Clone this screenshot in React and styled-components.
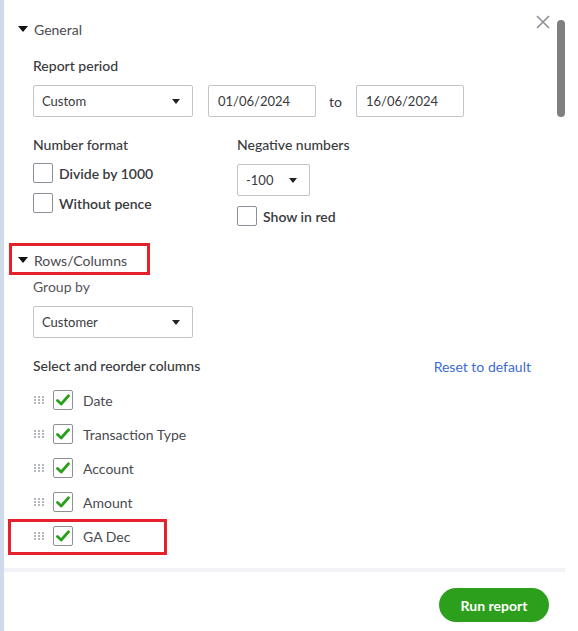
import React from "react";
import styled, { createGlobalStyle } from "styled-components";

const Global = createGlobalStyle`
  html, body { margin: 0; padding: 0; background: #fff; }
  body { font-family: Lato, "Open Sans", Arial, sans-serif; color: #393a3d; }
  *, *::before, *::after { box-sizing: border-box; }
`;

const Shell = styled.div`
  width: 578px;
  height: 631px;
  display: flex;
  background: #fff;
  overflow: hidden;
`;

const Strip = styled.div`
  width: 4px;
  flex: none;
  background: #cfdaeb;
`;

const Main = styled.div`
  width: 561px;
  flex: none;
  display: flex;
  flex-direction: column;
`;

const Panel = styled.div`
  position: relative;
  height: 568px;
  display: flex;
`;

const PanelContent = styled.div`
  flex: 1;
  padding: 19px 26px 0 14px;
`;

const ScrollTrack = styled.div`
  width: 8px;
  flex: none;
  padding-top: 20px;
`;

const Thumb = styled.div`
  width: 8px;
  height: 97px;
  border-radius: 4px;
  background: #808080;
`;

const CloseButton = styled.button`
  position: absolute;
  top: 15px;
  right: 15px;
  width: 14px;
  height: 14px;
  padding: 0;
  border: 0;
  background: none;
  display: flex;
`;

const SectionToggle = styled.div`
  position: relative;
  display: flex;
  width: fit-content;
  align-items: center;
  gap: 6px;
  height: 20px;
  font-size: 14px;
  color: #4a4b50;
  margin-top: ${(p) => p.$mt || 0}px;
  ${(p) =>
    p.$marked &&
    `&::after {
      content: "";
      position: absolute;
      left: -9px;
      top: -7px;
      width: 141px;
      height: 32px;
      border: 3px solid #e5222b;
    }`}
`;

const Caret = styled.span`
  width: 0;
  height: 0;
  border-left: 5px solid transparent;
  border-right: 5px solid transparent;
  border-top: 6px solid #111;
`;

const Body = styled.div`
  padding-left: 15px;
`;

const Label = styled.div`
  font-size: 14px;
  line-height: 20px;
  font-weight: ${(p) => (p.$light ? 400 : 500)};
  color: ${(p) => (p.$light ? "#55565b" : "#393a3d")};
  margin-top: ${(p) => p.$mt || 0}px;
`;

const ControlRow = styled.div`
  display: flex;
  align-items: center;
  margin-top: 9px;
`;

const SelectBox = styled.div`
  width: ${(p) => p.$w}px;
  height: 32px;
  border: 1px solid #c1c4c8;
  border-radius: 2px;
  display: flex;
  align-items: center;
  justify-content: space-between;
  padding: 0 12px 0 8px;
  font-size: 13px;
  color: #393a3d;
`;

const SmallCaret = styled.span`
  width: 0;
  height: 0;
  border-left: 4px solid transparent;
  border-right: 4px solid transparent;
  border-top: 5px solid #222;
`;

const DateInput = styled.div`
  width: 108px;
  height: 32px;
  border: 1px solid #c1c4c8;
  border-radius: 2px;
  display: flex;
  align-items: center;
  padding-left: 9px;
  font-size: 13px;
  color: #393a3d;
  margin-left: ${(p) => p.$ml || 0}px;
`;

const To = styled.span`
  font-size: 14px;
  color: #393a3d;
  margin-left: 13px;
  margin-right: 14px;
`;

const TwoCols = styled.div`
  display: grid;
  grid-template-columns: 204px 1fr;
  margin-top: 18px;
`;

const Col = styled.div`
  display: flex;
  flex-direction: column;
`;

const CheckList = styled.div`
  display: flex;
  flex-direction: column;
  gap: 10px;
  margin-top: ${(p) => p.$mt || 8}px;
`;

const CheckRow = styled.label`
  display: flex;
  align-items: center;
  gap: 6px;
  height: 20px;
  font-size: 14px;
  font-weight: 600;
  color: #393a3d;
`;

const Box = styled.span`
  width: 20px;
  height: 20px;
  flex: none;
  border: 1px solid #8d9096;
  border-radius: 2px;
  background: #fff;
  display: flex;
  align-items: center;
  justify-content: center;
`;

const HeaderRow = styled.div`
  display: flex;
  justify-content: space-between;
  align-items: center;
  margin-top: 18px;
`;

const Link = styled.a`
  font-size: 14px;
  color: #3d6bd0;
  text-decoration: none;
`;

const ColumnList = styled.div`
  margin-top: 7px;
  display: flex;
  flex-direction: column;
`;

const ColumnRow = styled.div`
  position: relative;
  height: 34px;
  display: flex;
  align-items: center;
  padding-left: 1px;
  font-size: 14px;
  color: #4a4b50;
  ${(p) =>
    p.$marked &&
    `&::after {
      content: "";
      position: absolute;
      left: -25px;
      top: 0;
      width: 159px;
      height: 36px;
      border: 3px solid #e5222b;
    }`}
`;

const Handle = styled.span`
  width: 10px;
  display: flex;
  margin-right: 9px;
`;

const ColumnName = styled.span`
  margin-left: 10px;
`;

const Divider = styled.div`
  height: 4px;
  background: #f3f3f7;
`;

const Footer = styled.div`
  display: flex;
  justify-content: flex-end;
  padding: 16px 16px 0 0;
`;

const RunButton = styled.button`
  width: 110px;
  height: 34px;
  border: 0;
  border-radius: 17px;
  background: #2ca01c;
  color: #fff;
  font-family: Lato, "Open Sans", Arial, sans-serif;
  font-size: 14px;
  font-weight: 700;
`;

const Check = () => (
  <svg width="14" height="12" viewBox="0 0 14 12">
    <path d="M1.5 6.5 L5.2 10 L12.5 1.8" fill="none" stroke="#2ca01c" strokeWidth="2.8" strokeLinecap="round" strokeLinejoin="round" />
  </svg>
);

const Dots = () => (
  <svg width="10" height="8" viewBox="0 0 10 8">
    {[0, 3, 6].map((y) =>
      [0, 4, 8].map((x) => <rect key={`${x}-${y}`} x={x} y={y} width="2" height="2" fill="#b5b8bd" />)
    )}
  </svg>
);

const CheckBox = ({ checked }) => <Box>{checked && <Check />}</Box>;

const columns = ["Date", "Transaction Type", "Account", "Amount", "GA Dec"];

export default function App() {
  return (
    <>
      <Global />
      <Shell>
        <Strip />
        <Main>
          <Panel>
            <PanelContent>
              <SectionToggle>
                <Caret />
                General
              </SectionToggle>
              <Body>
                <Label $mt={17}>Report period</Label>
                <ControlRow>
                  <SelectBox $w={160}>
                    Custom
                    <SmallCaret />
                  </SelectBox>
                  <DateInput $ml={15}>01/06/2024</DateInput>
                  <To>to</To>
                  <DateInput>16/06/2024</DateInput>
                </ControlRow>
                <TwoCols>
                  <Col>
                    <Label>Number format</Label>
                    <CheckList>
                      <CheckRow>
                        <CheckBox />
                        Divide by 1000
                      </CheckRow>
                      <CheckRow>
                        <CheckBox />
                        Without pence
                      </CheckRow>
                    </CheckList>
                  </Col>
                  <Col>
                    <Label>Negative numbers</Label>
                    <ControlRow>
                      <SelectBox $w={73}>
                        -100
                        <SmallCaret />
                      </SelectBox>
                    </ControlRow>
                    <CheckList $mt={10}>
                      <CheckRow>
                        <CheckBox />
                        Show in red
                      </CheckRow>
                    </CheckList>
                  </Col>
                </TwoCols>
              </Body>
              <SectionToggle $mt={24} $marked>
                <Caret />
                Rows/Columns
              </SectionToggle>
              <Body>
                <Label $mt={7} $light>
                  Group by
                </Label>
                <ControlRow>
                  <SelectBox $w={160}>
                    Customer
                    <SmallCaret />
                  </SelectBox>
                </ControlRow>
                <HeaderRow>
                  <Label>Select and reorder columns</Label>
                  <Link href="#">Reset to default</Link>
                </HeaderRow>
                <ColumnList>
                  {columns.map((c) => (
                    <ColumnRow key={c} $marked={c === "GA Dec"}>
                      <Handle>
                        <Dots />
                      </Handle>
                      <CheckBox checked />
                      <ColumnName>{c}</ColumnName>
                    </ColumnRow>
                  ))}
                </ColumnList>
              </Body>
            </PanelContent>
            <ScrollTrack>
              <Thumb />
            </ScrollTrack>
            <CloseButton aria-label="Close">
              <svg width="14" height="14" viewBox="0 0 14 14">
                <path d="M1 1 L13 13 M13 1 L1 13" stroke="#8d9096" strokeWidth="1.6" />
              </svg>
            </CloseButton>
          </Panel>
          <Divider />
          <Footer>
            <RunButton>Run report</RunButton>
          </Footer>
        </Main>
      </Shell>
    </>
  );
}
